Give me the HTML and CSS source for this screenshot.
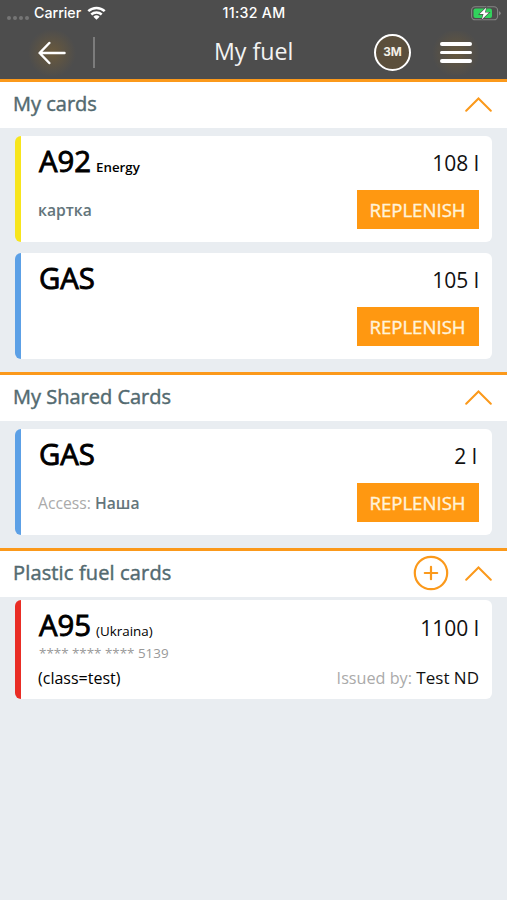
FILE: index.html
```html
<!DOCTYPE html>
<html lang="en">
<head>
<meta charset="utf-8">
<title>My fuel</title>
<link rel="stylesheet" href="styles.css">
</head>
<body>
<header class="top">
  <div class="status">
    <div class="carrier">
      <span class="signal"><i></i><i></i><i></i><i></i></span>
      <span class="carrier-name">Carrier</span>
      <svg class="wifi" width="19" height="14" viewBox="0 0 19 14"><g fill="none" stroke="#fff" stroke-width="2.5"><path d="M1.3 5.2a11.8 11.8 0 0 1 16.4 0"/><path d="M4.3 8.5a7.6 7.6 0 0 1 10.4 0"/></g><path d="M6.4 10.7a4.5 4.5 0 0 1 6.2 0L9.5 13.8z" fill="#fff"/></svg>
    </div>
    <span class="clock">11:32 AM</span>
    <svg class="battery" width="30" height="15" viewBox="0 0 30 15"><rect x=".6" y=".8" width="26" height="13" rx="3.6" fill="none" stroke="#858585" stroke-width="1.1"/><path d="M28.2 5.2q1.4.6 1.4 2.1t-1.4 2.1z" fill="#929292"/><rect x="2.5" y="2.5" width="18.5" height="9.6" rx="2" fill="#32d35d"/><path class="bolt" d="M15.3 1.4 8.5 8.1h4l-1.7 5.4 7.2-6.9h-4.1z"/></svg>
  </div>
  <nav class="bar">
    <div class="back">
      <svg width="28" height="24" viewBox="0 0 28 24" fill="none" stroke="#fff" stroke-width="2.5" stroke-linecap="round" stroke-linejoin="round"><path d="M26.5 12H1.8M11.3 2 1.6 12l9.7 10"/></svg>
    </div>
    <span class="divider"></span>
    <h1>My fuel</h1>
    <span class="badge">3M</span>
    <div class="menu"><i></i><i></i><i></i></div>
  </nav>
</header>

<main>
  <section>
    <div class="head"><h2>My cards</h2>
      <svg class="chev" width="27" height="15" viewBox="0 0 27 15"><path d="M1.2 13.8 13.5 1.5l12.3 12.3"/></svg></div>
    <div class="list">
      <article class="card yellow">
        <div class="row"><div class="fuel"><b>A92</b><span class="kind">Energy</span></div><span class="amount">108 l</span></div>
        <div class="row foot"><span class="note">картка</span><button>REPLENISH</button></div>
      </article>
      <article class="card blue">
        <div class="row"><div class="fuel"><b>GAS</b></div><span class="amount">105 l</span></div>
        <div class="row foot"><span></span><button>REPLENISH</button></div>
      </article>
    </div>
  </section>

  <section>
    <div class="head"><h2>My Shared Cards</h2>
      <svg class="chev" width="27" height="15" viewBox="0 0 27 15"><path d="M1.2 13.8 13.5 1.5l12.3 12.3"/></svg></div>
    <div class="list">
      <article class="card blue">
        <div class="row"><div class="fuel"><b>GAS</b></div><span class="amount inset">2 l</span></div>
        <div class="row foot"><span class="note"><em>Access:</em> Наша</span><button>REPLENISH</button></div>
      </article>
    </div>
  </section>

  <section>
    <div class="head"><h2 class="spaced">Plastic fuel cards</h2>
      <svg class="plus" width="36" height="36" viewBox="0 0 36 36"><circle cx="18" cy="18" r="16.2"/><path d="M11.8 18h12.4M18 11.8v12.4"/></svg>
      <svg class="chev" width="27" height="15" viewBox="0 0 27 15"><path d="M1.2 13.8 13.5 1.5l12.3 12.3"/></svg></div>
    <div class="list tight">
      <article class="card red">
        <div class="row"><div class="fuel"><b>A95</b><span class="region">(Ukraina)</span></div><span class="amount">1100 l</span></div>
        <div class="number">**** **** **** 5139</div>
        <div class="row issue"><span class="klass">(class=test)</span><span class="issuer"><em>Issued by:</em> Test ND</span></div>
      </article>
    </div>
  </section>
</main>
</body>
</html>
```
FILE: styles.css
```css
* { box-sizing: border-box; }
body {
  margin: 0;
  min-height: 900px;
  background: #e9edf1;
  font-family: "Open Sans", "Noto Sans", sans-serif;
  color: #000;
}
h1, h2 { margin: 0; }
svg { display: block; flex: none; }
em { font-style: normal; }

.top { height: 79px; background: #4d4d4d; color: #fff; }
.status {
  height: 26px;
  padding: 0 6px 0 7px;
  display: grid;
  grid-template-columns: 1fr auto 1fr;
  align-items: center;
  font: 500 14.2px/26px Inter, sans-serif;
}
.clock { letter-spacing: .3px; }
.carrier { display: flex; align-items: center; }
.signal { display: flex; gap: 2px; margin: 9px 5px 0 0; }
.signal i { width: 4px; height: 4px; border-radius: 50%; background: #757575; }
.wifi { margin-left: 6px; }
.battery { justify-self: end; }
.bolt { fill: #fff; stroke: #4d4d4d; stroke-width: 1.2; paint-order: stroke; }

.bar { height: 53px; display: flex; align-items: center; }
.back {
  width: 60px;
  height: 46px;
  margin-left: 22px;
  display: flex;
  align-items: center;
  justify-content: center;
  background: radial-gradient(circle 24px, #6b5a3c, #4d4d4d);
}
.divider { width: 2px; height: 31px; margin-left: 11px; background: #7c7c7c; }
h1 {
  flex: 1;
  padding: 0 0 3px 119px;
  font-weight: 400;
  font-size: 23.2px;
  line-height: 50px;
  color: #f3f3f3;
}
.badge {
  width: 37px;
  height: 37px;
  border: 2px solid #fff;
  border-radius: 50%;
  background: #5b4f3c;
  font: 700 11.8px/33px Inter, sans-serif;
  text-align: center;
  color: #f3efe6;
}
.menu {
  width: 56px;
  height: 44px;
  margin: 0 23px 0 17px;
  display: flex;
  flex-direction: column;
  align-items: center;
  justify-content: center;
  gap: 5px;
  background: radial-gradient(circle 24px, #67583d, #4d4d4d);
}
.menu i { width: 32px; height: 3.8px; border-radius: 2px; background: #fff; }

.head {
  height: 49px;
  padding: 0 15px 2px 13px;
  display: flex;
  align-items: center;
  border-top: 3px solid #fb991b;
  background: #fff;
}
h2 {
  flex: 1;
  font-weight: 400;
  font-size: 20px;
  line-height: 44px;
  color: #536a70;
  -webkit-text-stroke: .45px #536a70;
}
.spaced { letter-spacing: .15px; }
.chev, .plus { fill: none; stroke: #fb991b; stroke-width: 2; stroke-linecap: round; }
.plus { margin-right: 16px; stroke-width: 2.2; }

.list { padding: 8px 15px 13px; display: grid; gap: 11px; }
.list.tight { padding-top: 3px; }
.card {
  height: 106px;
  padding: 6px 13px 0 17px;
  border-left: 6px solid;
  border-radius: 6px;
  background: #fff;
}
.yellow { border-color: #f7e51d; }
.blue { border-color: #5ca0e6; }
.red { border-color: #e92d25; height: 99px; }
.row { height: 40px; display: flex; justify-content: space-between; align-items: flex-start; }
.fuel { padding-left: 1px; line-height: 39px; }
.fuel b { font-weight: 400; font-size: 29.3px; -webkit-text-stroke: .9px #000; }
.kind { margin-left: 5px; font-weight: 600; font-size: 13.3px; }
.region { margin-left: 5px; font-size: 13.4px; }
.amount { font-size: 21px; line-height: 42px; color: #111; }
.red .amount { line-height: 45px; }
.inset { padding-right: 2px; }
.foot { height: 39px; margin-top: 8px; align-items: center; }
.note { font-weight: 600; font-size: 15.7px; color: #63757b; }
em { font-weight: 400; color: #aaa; }
button {
  width: 122px;
  height: 39px;
  padding: 0 1px 0 0;
  border: 0;
  background: #ff9811;
  color: #fff3d9;
  font: 400 18.6px/39px "Open Sans", sans-serif;
  -webkit-text-stroke: .4px #fff3d9;
}
.number { height: 16px; padding-left: 1px; font-size: 13.4px; line-height: 14px; color: #999; }
.issue { height: 24px; font-size: 16px; line-height: 24px; margin-top: 4px; }
.issuer { font-size: 17px; color: #111; }
.issuer em { font-size: 16.2px; }
```
